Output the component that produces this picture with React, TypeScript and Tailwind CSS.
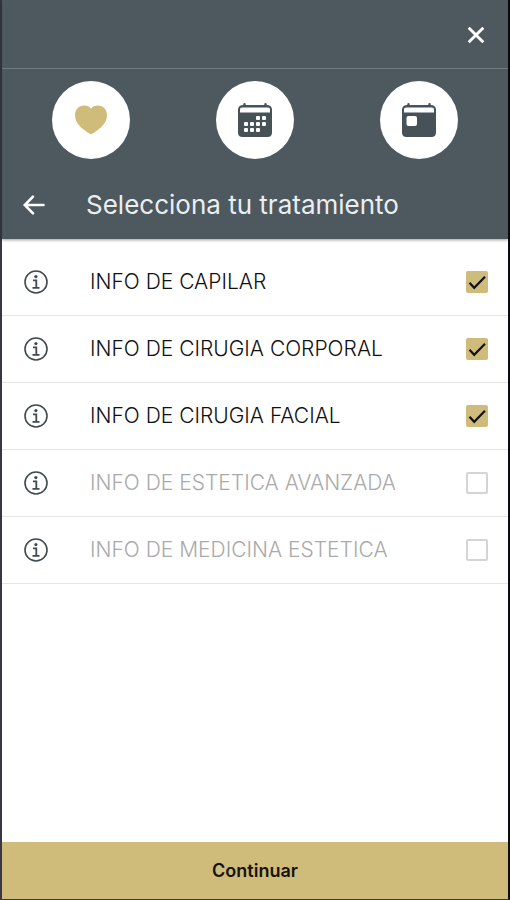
import { useState } from 'react';

const TREATMENTS = [
  { id: 'capilar', name: 'INFO DE CAPILAR', selected: true },
  { id: 'corporal', name: 'INFO DE CIRUGIA CORPORAL', selected: true },
  { id: 'facial', name: 'INFO DE CIRUGIA FACIAL', selected: true },
  { id: 'avanzada', name: 'INFO DE ESTETICA AVANZADA', selected: false },
  { id: 'medicina', name: 'INFO DE MEDICINA ESTETICA', selected: false },
];

// [x, y] of each day square in the month calendar
const DAYS = [
  [20, 15], [26, 15],
  [8, 21], [14, 21], [20, 21], [26, 21],
  [8, 27], [14, 27], [20, 27],
];

function CloseIcon() {
  return (
    <svg viewBox="0 0 20 20" className="h-5 w-5" fill="none" stroke="currentColor" strokeWidth="2.9">
      <path d="M2.7 2.7 17.3 17.3M17.3 2.7 2.7 17.3" />
    </svg>
  );
}

function BackIcon() {
  return (
    <svg viewBox="0 0 24 24" className="h-6 w-6" fill="none" stroke="currentColor" strokeWidth="2.6" strokeLinecap="round">
      <path d="M21.500 12H3.500M11 3.600 2.800 12l8.200 8.400" />
    </svg>
  );
}

function HeartIcon() {
  return (
    <svg viewBox="0 0 32 30" className="h-[30px] w-8 text-[#cfbc7a]" fill="currentColor">
      <path d="M16 29.6C11.5 26.5 0 20.5 0 10.2 0 4.6 4 .6 9 .6c3.2 0 5.6 1.2 7 3.2 1.4-2 3.8-3.200 7-3.200 5 0 9 4 9 9.6 0 10.3-11.500 16.300-16 19.400z" />
    </svg>
  );
}

function CalendarShape() {
  return (
    <>
      <path d="M7.500 0a1.200 1.200 0 0 1 1.200 1.200V2h18.600V1.200a1.200 1.200 0 0 1 2.400 0V2C33 2.100 35 3.800 35 6.500v23c0 3-1.800 4.500-4.500 4.500h-25C2.800 34 1 32.500 1 29.500v-23c0-2.700 2-4.400 5.300-4.500V1.200A1.200 1.200 0 0 1 7.500 0z" />
      <path fill="#fff" d="M5.200 4.400h25.600c1.400 0 2.200.8 2.200 2.200v2.800H3V6.600c0-1.400.8-2.200 2.200-2.200z" />
    </>
  );
}

function MonthIcon() {
  return (
    <svg viewBox="0 0 36 34" className="h-[34px] w-9 text-[#465158]" fill="currentColor">
      <CalendarShape />
      {DAYS.map(([x, y]) => (
        <rect key={`${x}-${y}`} x={x - 1} y={y - 2} width="4" height="4" rx="1" fill="#fff" />
      ))}
    </svg>
  );
}

function DayIcon() {
  return (
    <svg viewBox="0 0 36 34" className="h-[34px] w-9 text-[#465158]" fill="currentColor">
      <CalendarShape />
      <rect x="5.500" y="13" width="10.500" height="10" rx="2" fill="#fff" />
    </svg>
  );
}

function InfoIcon() {
  return (
    <svg viewBox="0 0 24 24" className="h-6 w-6" fill="none" stroke="currentColor">
      <circle cx="12" cy="12" r="11" strokeWidth="1.600" />
      <path d="M9 10.300h3.300v7M8.500 17.800h7" strokeWidth="1.800" />
      <circle cx="11.900" cy="6.600" r="1.600" fill="currentColor" stroke="none" />
    </svg>
  );
}

export default function App() {
  const [items, setItems] = useState(TREATMENTS);

  const toggle = (id: string) => {
    setItems(items.map((item) => (item.id === id ? { ...item, selected: !item.selected } : item)));
  };

  return (
    <div className="flex min-h-screen flex-col border-x-2 border-b border-l-[#383842] border-r-[#0c0c0e] border-b-[#383842] bg-white font-['Inter',sans-serif]">
      <header className="bg-[#4d585f] text-white shadow-[0_1px_3px_rgba(0,0,0,0.4)]">
        <div className="flex h-[69px] items-center justify-end border-b border-[#6f7a81] px-[22px] pt-0.5">
          <button type="button" aria-label="Cerrar">
            <CloseIcon />
          </button>
        </div>

        {/* Section shortcuts */}
        <nav className="flex justify-between px-[50px] pt-3">
          <button type="button" aria-label="Favoritos" className="flex h-[78px] w-[78px] items-center justify-center rounded-full bg-white">
            <HeartIcon />
          </button>
          <button type="button" aria-label="Mes" className="flex h-[78px] w-[78px] items-center justify-center rounded-full bg-white">
            <MonthIcon />
          </button>
          <button type="button" aria-label="Día" className="flex h-[78px] w-[78px] items-center justify-center rounded-full bg-white">
            <DayIcon />
          </button>
        </nav>

        <div className="flex h-20 items-center gap-10 px-5 pt-3">
          <button type="button" aria-label="Volver">
            <BackIcon />
          </button>
          <h1 className="text-[26px] leading-8 text-[#e9eff1]">Selecciona tu tratamiento</h1>
        </div>
      </header>

      {/* Treatment list */}
      <ul className="flex-1 pt-[10px]">
        {items.map((item) => (
          <li key={item.id} className="flex h-[67px] items-center border-b border-[#e6e6e6] pl-[22px] pr-5">
            <button type="button" aria-label={`Más sobre ${item.name}`} className="text-[#3f4a50]">
              <InfoIcon />
            </button>
            <label
              htmlFor={item.id}
              className={`flex-1 pl-[42px] text-[21px] font-light leading-6 ${item.selected ? 'text-[#111111]' : 'text-[#aaaaaa]'}`}
            >
              {item.name}
            </label>
            <span className="grid">
              <input
                id={item.id}
                type="checkbox"
                checked={item.selected}
                onChange={() => toggle(item.id)}
                className="col-start-1 row-start-1 h-[22px] w-[22px] appearance-none rounded-[2px] border-2 border-[#d4d4d4] checked:border-[#cfbc7a] checked:bg-[#cfbc7a]"
              />
              {item.selected && (
                <svg
                  viewBox="0 0 22 22"
                  className="pointer-events-none col-start-1 row-start-1 h-[22px] w-[22px]"
                  fill="none"
                  stroke="#111"
                  strokeWidth="2.200"
                >
                  <path d="M3.500 11.800 8.200 16.800 19 5.800" />
                </svg>
              )}
            </span>
          </li>
        ))}
      </ul>

      <button type="button" className="h-[57px] bg-[#cfbc7a] text-[18px] font-semibold text-[#14120b]">
        Continuar
      </button>
    </div>
  );
}
